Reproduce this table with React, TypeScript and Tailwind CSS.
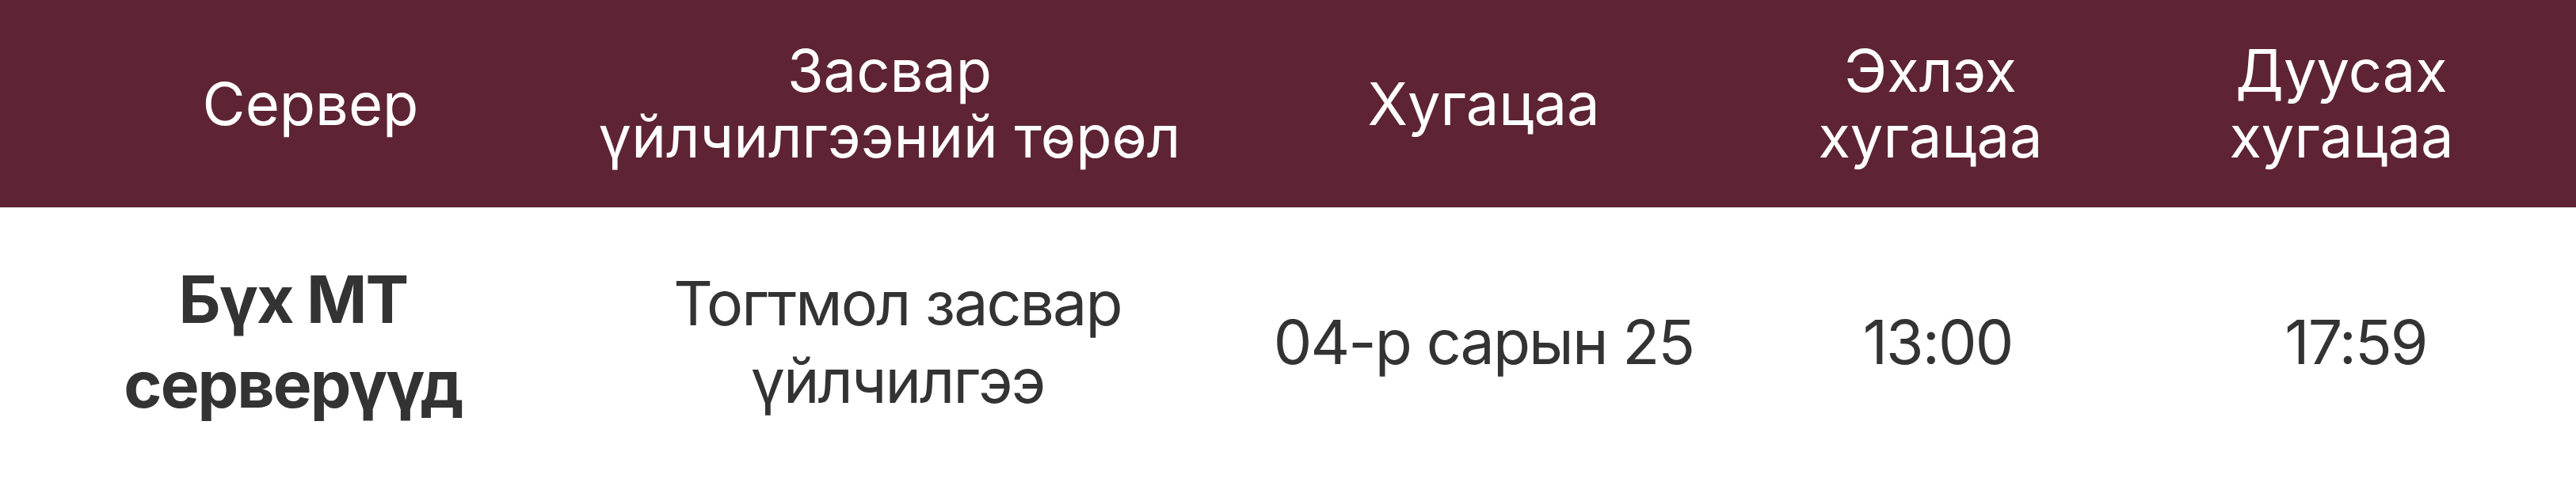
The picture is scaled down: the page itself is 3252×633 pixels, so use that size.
const headers: { lines: string[]; className: string }[] = [
  { lines: ["Сервер"], className: "pl-[44px]" },
  { lines: ["Засвар", "үйлчилгээний төрөл"], className: "" },
  { lines: ["Хугацаа"], className: "" },
  { lines: ["Эхлэх", "хугацаа"], className: "pr-[26px]" },
  { lines: ["Дуусах", "хугацаа"], className: "" },
];

const row = {
  server: ["Бүх МТ", "серверүүд"],
  type: ["Тогтмол засвар", "үйлчилгээ"],
  date: "04-р сарын 25",
  start: "13:00",
  end: "17:59",
};

export default function App() {
  return (
    <div className="w-[3252px] bg-white font-['Inter','Noto_Sans',sans-serif]">
      <div className="grid grid-cols-[740px_766px_734px_420px_592px] h-[262px] bg-[#5e2434] text-white text-[74px] leading-[83px]">
        {headers.map((h, i) => (
          <div key={i} className={`flex flex-col items-center justify-center text-center ${h.className}`}>
            {h.lines.map((l) => (
              <span key={l} className="whitespace-nowrap">
                {l}
              </span>
            ))}
          </div>
        ))}
      </div>
      <div className="grid grid-cols-[740px_766px_734px_420px_592px] h-[340px] text-[#333333] text-[77px] leading-[98px] tracking-tight">
        <div className="flex flex-col items-center justify-center text-center font-bold text-[82px] leading-[107px]">
          {row.server.map((l) => (
            <span key={l} className="whitespace-nowrap">
              {l}
            </span>
          ))}
        </div>
        <div className="flex flex-col items-center justify-center text-center pl-[20px]">
          {row.type.map((l) => (
            <span key={l} className="whitespace-nowrap">
              {l}
            </span>
          ))}
        </div>
        <div className="flex items-center justify-center whitespace-nowrap">{row.date}</div>
        <div className="flex items-center justify-center pr-[8px]">{row.start}</div>
        <div className="flex items-center justify-center pl-[36px]">{row.end}</div>
      </div>
    </div>
  );
}
